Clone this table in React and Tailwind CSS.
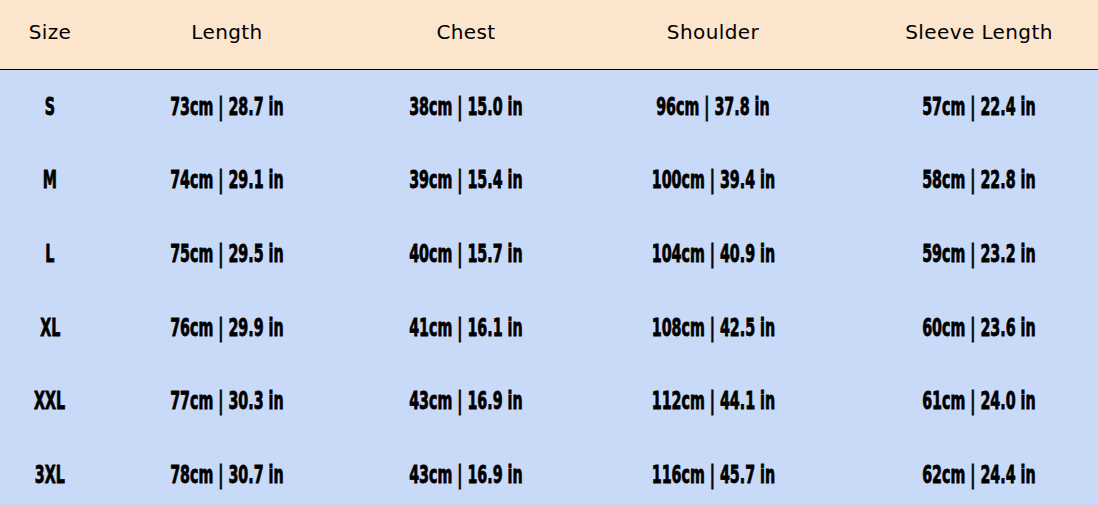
const headers = ['Size', 'Length', 'Chest', 'Shoulder', 'Sleeve Length'];

const rows = [
  ['S', '73cm | 28.7 in', '38cm | 15.0 in', '96cm | 37.8 in', '57cm | 22.4 in'],
  ['M', '74cm | 29.1 in', '39cm | 15.4 in', '100cm | 39.4 in', '58cm | 22.8 in'],
  ['L', '75cm | 29.5 in', '40cm | 15.7 in', '104cm | 40.9 in', '59cm | 23.2 in'],
  ['XL', '76cm | 29.9 in', '41cm | 16.1 in', '108cm | 42.5 in', '60cm | 23.6 in'],
  ['XXL', '77cm | 30.3 in', '43cm | 16.9 in', '112cm | 44.1 in', '61cm | 24.0 in'],
  ['3XL', '78cm | 30.7 in', '43cm | 16.9 in', '116cm | 45.7 in', '62cm | 24.4 in'],
];

// column widths tuned so cell centers line up with the screenshot
const cols = 'grid grid-cols-[100px_254px_224px_270px_262px]';

export default function App() {
  return (
    <div className="w-[1098px] h-[505px] overflow-hidden bg-[#c9daf8] text-black">
      <div className={`${cols} h-[70px] pb-[6px] bg-[#fce5cd] border-b border-black items-center font-['DejaVu_Sans',sans-serif] text-[20px] tracking-[0.02em]`}>
        {headers.map((h) => (
          <div key={h} className="text-center">{h}</div>
        ))}
      </div>
      {rows.map((r) => (
        <div key={r[0]} className={`${cols} h-[73.6px] items-center font-['DejaVu_Sans_Condensed',sans-serif] font-bold text-[24px]`}>
          {r.map((c, i) => (
            <div key={i} className="flex justify-center">
              <span className="inline-block whitespace-nowrap scale-x-[0.66] [-webkit-text-stroke:0.8px_black]">{c}</span>
            </div>
          ))}
        </div>
      ))}
    </div>
  );
}
